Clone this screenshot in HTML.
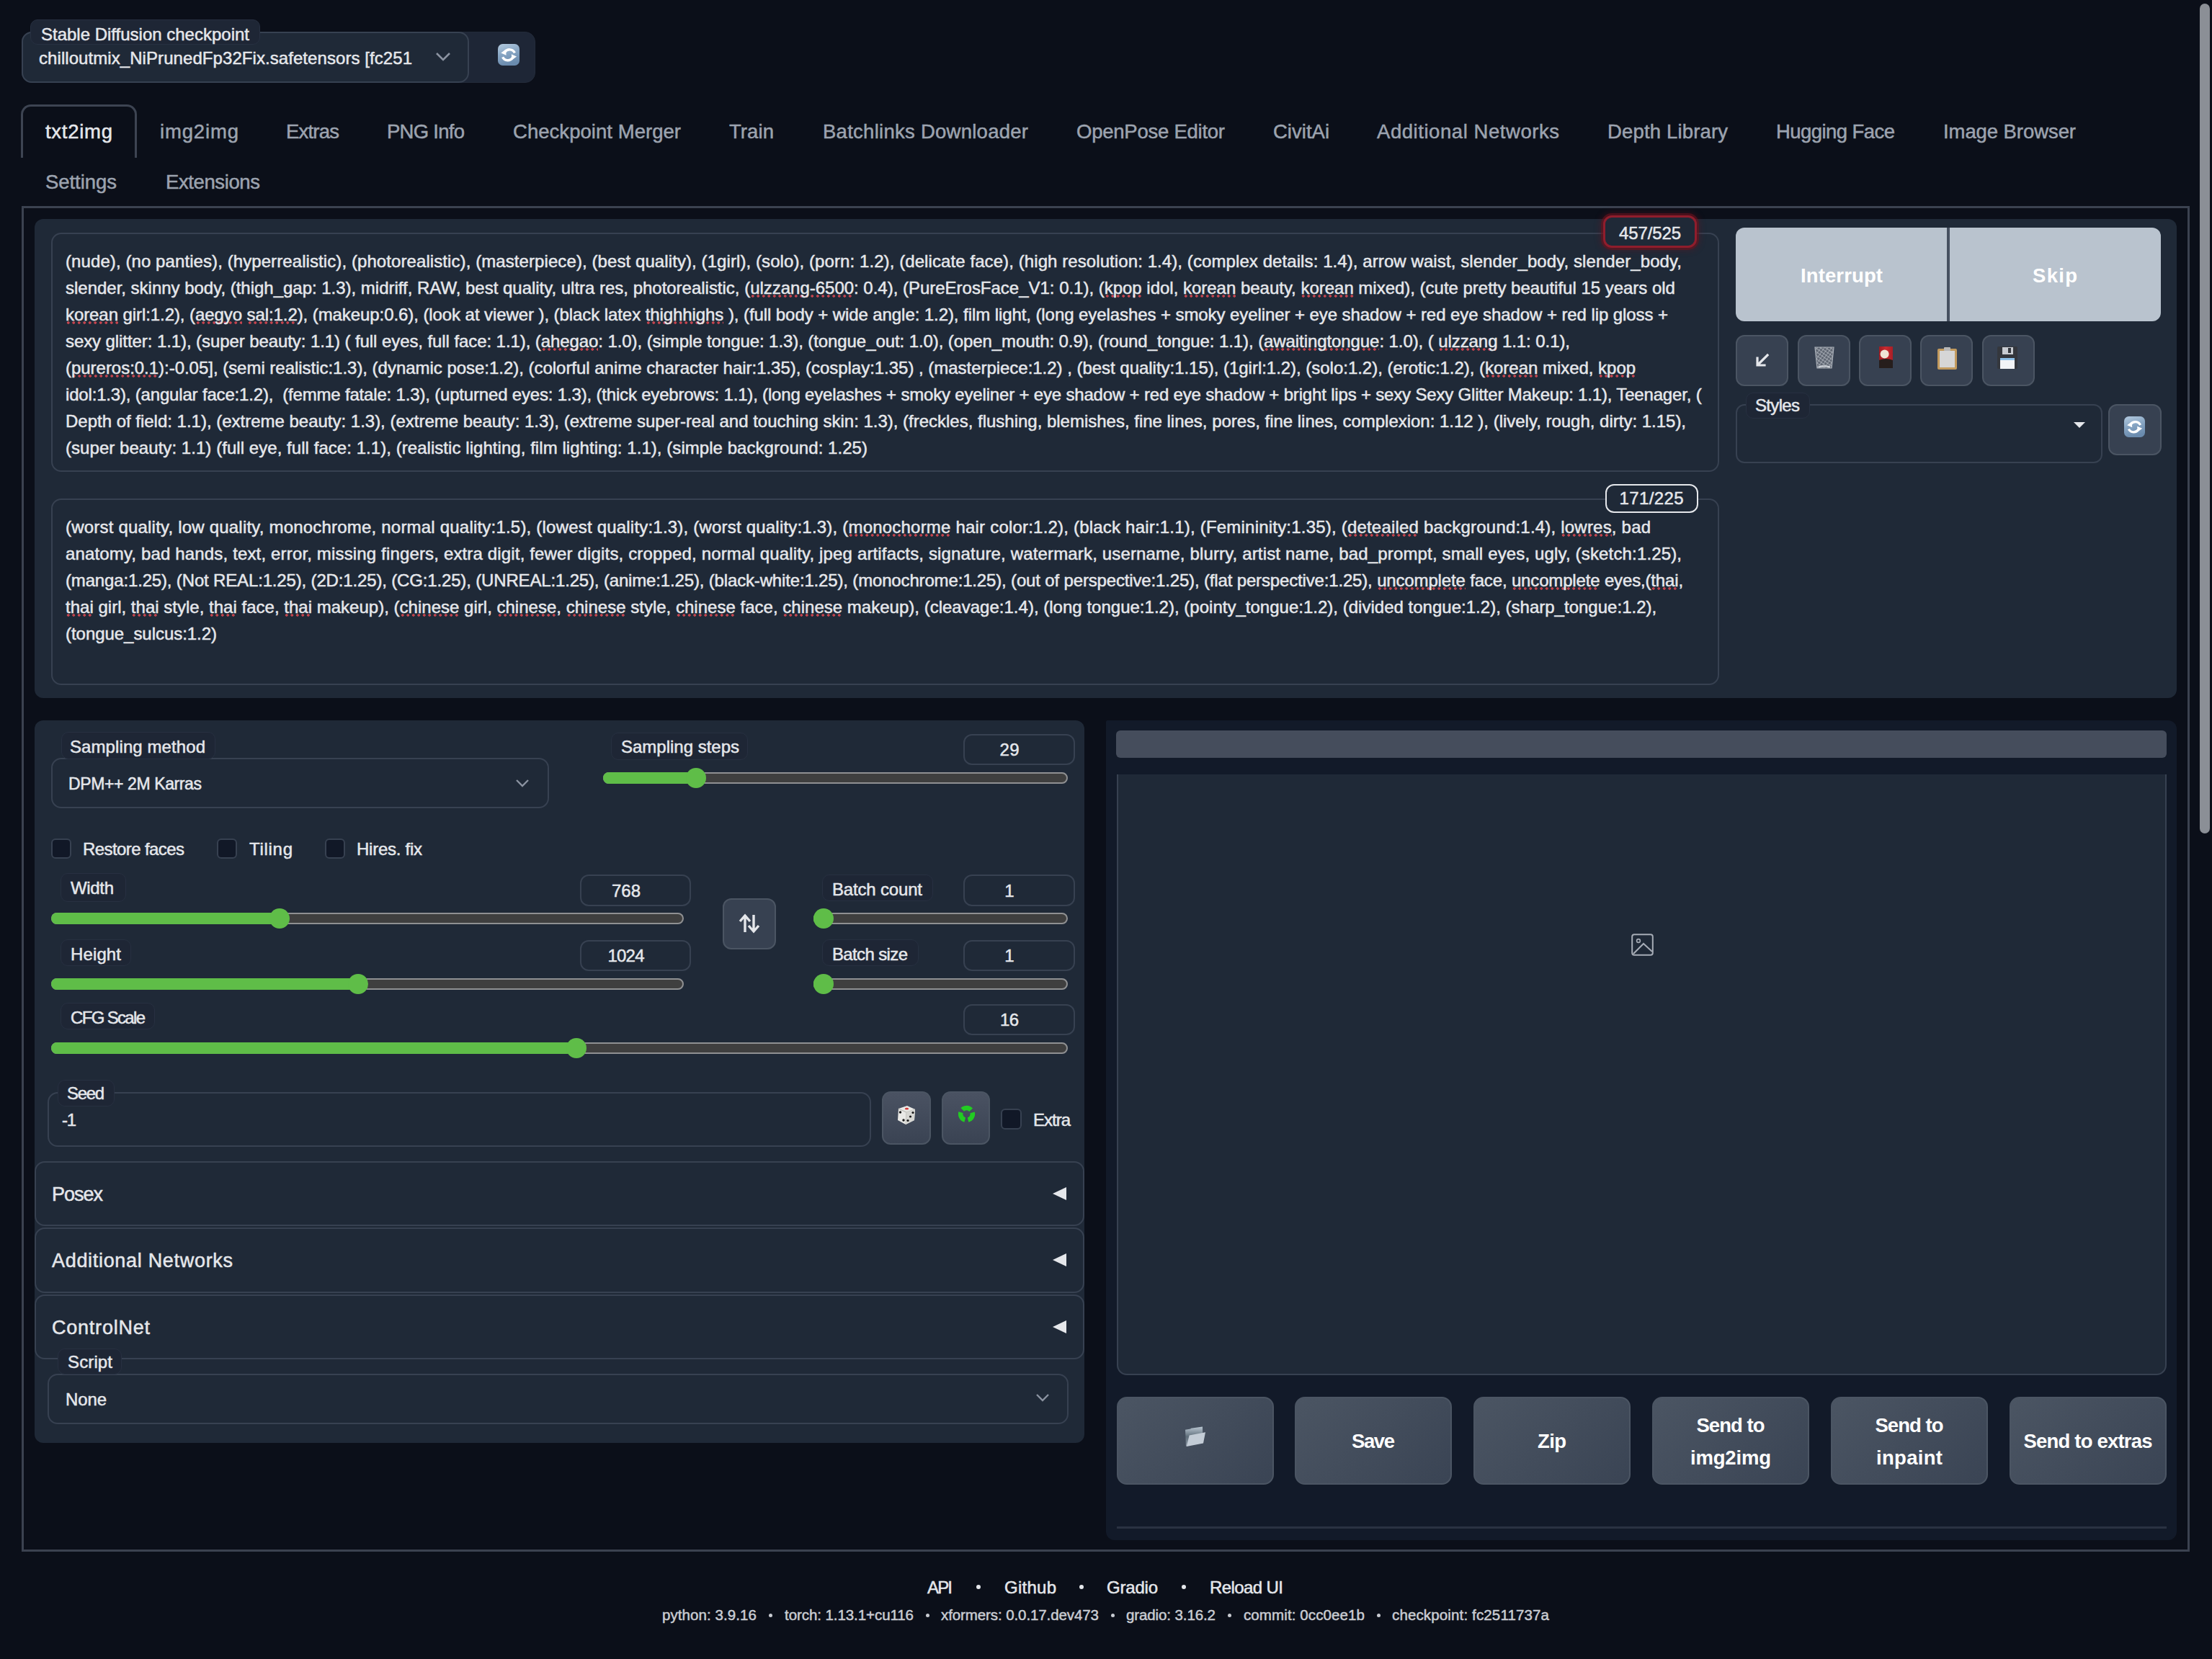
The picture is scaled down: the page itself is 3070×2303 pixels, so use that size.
<!DOCTYPE html>
<html><head><meta charset="utf-8"><style>
html,body{margin:0;padding:0;width:3070px;height:2303px;overflow:hidden;background:#0b0f19;font-family:"Liberation Sans", sans-serif;}
body>div,body>svg{position:absolute;}
body>div{-webkit-text-stroke:0.5px currentColor;}
u{text-decoration:none;background-image:radial-gradient(circle at 3.75px 2px,rgba(205,70,80,0.95) 1.5px,rgba(205,70,80,0) 2.1px);background-size:7.5px 4px;background-repeat:repeat-x;background-position:0 100%;}
</style></head><body>
<div style="left:30px;top:44px;width:713px;height:71px;background:#1e2636;border:1px solid #232b3a;border-radius:14px;box-sizing:border-box;"></div>
<div style="left:30px;top:44px;width:621px;height:71px;background:#1f2937;border:2px solid #374151;border-radius:14px;box-sizing:border-box;"></div>
<div style="left:42px;top:27px;width:319px;height:35px;background:#1e2635;border:1.5px solid #273041;border-radius:10px;box-sizing:border-box;"></div>
<div style="left:57.00px;top:33.88px;font-size:24px;line-height:27.60px;color:#e5e7eb;font-weight:400;letter-spacing:-0.003px;white-space:pre;">Stable Diffusion checkpoint</div>
<div style="left:54.00px;top:66.88px;font-size:24px;line-height:27.60px;color:#e5e7eb;font-weight:400;letter-spacing:0.069px;white-space:pre;">chilloutmix_NiPrunedFp32Fix.safetensors [fc251</div>
<svg style="left:604px;top:72px" width="22" height="14" viewBox="0 0 22 14"><path d="M2 2 L11 11 L20 2" fill="none" stroke="#8b93a1" stroke-width="2.6"/></svg>
<svg style="left:691px;top:61px" width="30" height="30" viewBox="0 0 29 29">
<defs><linearGradient id="rg691" x1="0" y1="0" x2="0.3" y2="1"><stop offset="0" stop-color="#b4cbe0"/><stop offset="0.5" stop-color="#88a6c4"/><stop offset="1" stop-color="#6a8bae"/></linearGradient></defs>
<rect x="0" y="0" width="29" height="29" rx="6.5" fill="url(#rg691)"/>
<path d="M9.2 11.2 A7.6 7.6 0 0 1 22.6 12" fill="none" stroke="#fff" stroke-width="3.3"/>
<path d="M4.2 12.2 L10.6 7.2 L11.2 15.2 Z" fill="#fff"/>
<path d="M6.4 17.6 A7.6 7.6 0 0 0 19.8 18.2" fill="none" stroke="#fff" stroke-width="3.3"/>
<path d="M25.2 16.8 L18.6 21.8 L18.2 13.8 Z" fill="#fff"/>
</svg>
<div style="left:29px;top:145px;width:161px;height:74px;border:3.5px solid #3d4452;border-bottom:none;border-radius:14px 14px 0 0;box-sizing:border-box;background:#0b0f19"></div>
<div style="left:63.00px;top:166.66px;font-size:27.5px;line-height:31.62px;color:#e5e7eb;font-weight:400;letter-spacing:0.727px;white-space:pre;">txt2img</div>
<div style="left:222.00px;top:166.66px;font-size:27.5px;line-height:31.62px;color:#9ca3af;font-weight:400;letter-spacing:0.847px;white-space:pre;">img2img</div>
<div style="left:397.00px;top:166.66px;font-size:27.5px;line-height:31.62px;color:#9ca3af;font-weight:400;letter-spacing:-0.787px;white-space:pre;">Extras</div>
<div style="left:537.00px;top:166.66px;font-size:27.5px;line-height:31.62px;color:#9ca3af;font-weight:400;letter-spacing:-0.729px;white-space:pre;">PNG Info</div>
<div style="left:712.00px;top:166.66px;font-size:27.5px;line-height:31.62px;color:#9ca3af;font-weight:400;letter-spacing:0.042px;white-space:pre;">Checkpoint Merger</div>
<div style="left:1012.00px;top:166.66px;font-size:27.5px;line-height:31.62px;color:#9ca3af;font-weight:400;letter-spacing:0.092px;white-space:pre;">Train</div>
<div style="left:1142.00px;top:166.66px;font-size:27.5px;line-height:31.62px;color:#9ca3af;font-weight:400;letter-spacing:0.264px;white-space:pre;">Batchlinks Downloader</div>
<div style="left:1494.00px;top:166.66px;font-size:27.5px;line-height:31.62px;color:#9ca3af;font-weight:400;letter-spacing:-0.245px;white-space:pre;">OpenPose Editor</div>
<div style="left:1767.00px;top:166.66px;font-size:27.5px;line-height:31.62px;color:#9ca3af;font-weight:400;letter-spacing:0.013px;white-space:pre;">CivitAi</div>
<div style="left:1911.00px;top:166.66px;font-size:27.5px;line-height:31.62px;color:#9ca3af;font-weight:400;letter-spacing:0.554px;white-space:pre;">Additional Networks</div>
<div style="left:2231.00px;top:166.66px;font-size:27.5px;line-height:31.62px;color:#9ca3af;font-weight:400;letter-spacing:0.160px;white-space:pre;">Depth Library</div>
<div style="left:2465.00px;top:166.66px;font-size:27.5px;line-height:31.62px;color:#9ca3af;font-weight:400;letter-spacing:-0.565px;white-space:pre;">Hugging Face</div>
<div style="left:2697.00px;top:166.66px;font-size:27.5px;line-height:31.62px;color:#9ca3af;font-weight:400;letter-spacing:-0.077px;white-space:pre;">Image Browser</div>
<div style="left:63.00px;top:236.66px;font-size:27.5px;line-height:31.62px;color:#9ca3af;font-weight:400;letter-spacing:-0.052px;white-space:pre;">Settings</div>
<div style="left:230.00px;top:236.66px;font-size:27.5px;line-height:31.62px;color:#9ca3af;font-weight:400;letter-spacing:-0.391px;white-space:pre;">Extensions</div>
<div style="left:30px;top:286px;width:3009px;height:1868px;background:transparent;border:3px solid #3b4250;border-radius:0;box-sizing:border-box;"></div>
<div style="left:48px;top:304px;width:2973px;height:665px;background:#1f2937;border-radius:12px;box-sizing:border-box;"></div>
<div style="left:71px;top:323px;width:2315px;height:332px;background:#1f2937;border:2px solid #374151;border-radius:14px;box-sizing:border-box;"></div>
<div style="left:71px;top:692px;width:2315px;height:259px;background:#1f2937;border:2px solid #374151;border-radius:14px;box-sizing:border-box;"></div>
<div style="left:91.00px;top:348.88px;font-size:24px;line-height:27.60px;color:#e5e7eb;font-weight:400;letter-spacing:0.085px;white-space:pre;">(nude), (no panties), (hyperrealistic), (photorealistic), (masterpiece), (best quality), (1girl), (solo), (porn: 1.2), (delicate face), (high resolution: 1.4), (complex details: 1.4), arrow waist, slender_body, slender_body,</div>
<div style="left:91.00px;top:385.88px;font-size:24px;line-height:27.60px;color:#e5e7eb;font-weight:400;letter-spacing:-0.015px;white-space:pre;">slender, skinny body, (thigh_gap: 1.3), midriff, RAW, best quality, ultra res, photorealistic, (<u>ulzzang-6500</u>: 0.4), (PureErosFace_V1: 0.1), (<u>kpop</u> idol, <u>korean</u> beauty, <u>korean</u> mixed), (cute pretty beautiful 15 years old</div>
<div style="left:91.00px;top:422.88px;font-size:24px;line-height:27.60px;color:#e5e7eb;font-weight:400;letter-spacing:-0.079px;white-space:pre;"><u>korean</u> girl:1.2), (<u>aegyo</u> <u>sal:1.2</u>), (makeup:0.6), (look at viewer ), (black latex <u>thighhighs</u> ), (full body + wide angle: 1.2), film light, (long eyelashes + smoky eyeliner + eye shadow + red eye shadow + red lip gloss +</div>
<div style="left:91.00px;top:459.88px;font-size:24px;line-height:27.60px;color:#e5e7eb;font-weight:400;letter-spacing:-0.083px;white-space:pre;">sexy glitter: 1.1), (super beauty: 1.1) ( full eyes, full face: 1.1), (<u>ahegao</u>: 1.0), (simple tongue: 1.3), (tongue_out: 1.0), (open_mouth: 0.9), (round_tongue: 1.1), (<u>awaitingtongue</u>: 1.0), ( <u>ulzzang</u> 1.1: 0.1),</div>
<div style="left:91.00px;top:496.88px;font-size:24px;line-height:27.60px;color:#e5e7eb;font-weight:400;letter-spacing:-0.027px;white-space:pre;">(<u>pureros:0.1</u>):-0.05], (semi realistic:1.3), (dynamic pose:1.2), (colorful anime character hair:1.35), (cosplay:1.35) , (masterpiece:1.2) , (best quality:1.15), (1girl:1.2), (solo:1.2), (erotic:1.2), (<u>korean</u> mixed, <u>kpop</u></div>
<div style="left:91.00px;top:533.88px;font-size:24px;line-height:27.60px;color:#e5e7eb;font-weight:400;letter-spacing:-0.177px;white-space:pre;">idol:1.3), (angular face:1.2),  (femme fatale: 1.3), (upturned eyes: 1.3), (thick eyebrows: 1.1), (long eyelashes + smoky eyeliner + eye shadow + red eye shadow + bright lips + sexy Sexy Glitter Makeup: 1.1), Teenager, (</div>
<div style="left:91.00px;top:570.88px;font-size:24px;line-height:27.60px;color:#e5e7eb;font-weight:400;letter-spacing:-0.010px;white-space:pre;">Depth of field: 1.1), (extreme beauty: 1.3), (extreme beauty: 1.3), (extreme super-real and touching skin: 1.3), (freckles, flushing, blemishes, fine lines, pores, fine lines, complexion: 1.12 ), (lively, rough, dirty: 1.15),</div>
<div style="left:91.00px;top:607.88px;font-size:24px;line-height:27.60px;color:#e5e7eb;font-weight:400;letter-spacing:0.051px;white-space:pre;">(super beauty: 1.1) (full eye, full face: 1.1), (realistic lighting, film lighting: 1.1), (simple background: 1.25)</div>
<div style="left:91.00px;top:717.88px;font-size:24px;line-height:27.60px;color:#e5e7eb;font-weight:400;letter-spacing:0.204px;white-space:pre;">(worst quality, low quality, monochrome, normal quality:1.5), (lowest quality:1.3), (worst quality:1.3), (<u>monochorme</u> hair color:1.2), (black hair:1.1), (Femininity:1.35), (<u>deteailed</u> background:1.4), <u>lowres</u>, bad</div>
<div style="left:91.00px;top:754.88px;font-size:24px;line-height:27.60px;color:#e5e7eb;font-weight:400;letter-spacing:0.155px;white-space:pre;">anatomy, bad hands, text, error, missing fingers, extra digit, fewer digits, cropped, normal quality, jpeg artifacts, signature, watermark, username, blurry, artist name, bad_prompt, small eyes, ugly, (sketch:1.25),</div>
<div style="left:91.00px;top:791.88px;font-size:24px;line-height:27.60px;color:#e5e7eb;font-weight:400;letter-spacing:-0.158px;white-space:pre;">(manga:1.25), (Not REAL:1.25), (2D:1.25), (CG:1.25), (UNREAL:1.25), (anime:1.25), (black-white:1.25), (monochrome:1.25), (out of perspective:1.25), (flat perspective:1.25), <u>uncomplete</u> face, <u>uncomplete</u> eyes,(<u>thai</u>,</div>
<div style="left:91.00px;top:828.88px;font-size:24px;line-height:27.60px;color:#e5e7eb;font-weight:400;letter-spacing:0.013px;white-space:pre;"><u>thai</u> girl, <u>thai</u> style, <u>thai</u> face, <u>thai</u> makeup), (<u>chinese</u> girl, <u>chinese</u>, <u>chinese</u> style, <u>chinese</u> face, <u>chinese</u> makeup), (cleavage:1.4), (long tongue:1.2), (pointy_tongue:1.2), (divided tongue:1.2), (sharp_tongue:1.2),</div>
<div style="left:91.00px;top:865.88px;font-size:24px;line-height:27.60px;color:#e5e7eb;font-weight:400;letter-spacing:-0.044px;white-space:pre;">(tongue_sulcus:1.2)</div>
<div style="left:2225px;top:299px;width:130px;height:45px;background:#1f2937;border:3px solid #8f1d2c;border-radius:12px;box-sizing:border-box;box-shadow:0 0 0 3px rgba(110,18,30,0.55),0 0 8px 4px rgba(110,18,30,0.35);"></div>
<div style="left:2247.00px;top:309.88px;font-size:24px;line-height:27.60px;color:#e5e7eb;font-weight:400;letter-spacing:-0.126px;white-space:pre;">457/525</div>
<div style="left:2228px;top:672px;width:129px;height:40px;background:#1f2937;border:2px solid #e5e7eb;border-radius:12px;box-sizing:border-box;"></div>
<div style="left:2247.50px;top:677.88px;font-size:24px;line-height:27.60px;color:#e5e7eb;font-weight:400;letter-spacing:0.374px;white-space:pre;">171/225</div>
<div style="left:2409px;top:316px;width:590px;height:130px;background:#b9c3ce;border-radius:12px;box-sizing:border-box;"></div>
<div style="left:2702px;top:316px;width:4px;height:130px;background:#465060;border-radius:0;box-sizing:border-box;"></div>
<div style="-webkit-text-stroke:0;left:2499.00px;top:366.66px;font-size:27.5px;line-height:31.62px;color:#ffffff;font-weight:700;letter-spacing:0.119px;white-space:pre;">Interrupt</div>
<div style="-webkit-text-stroke:0;left:2821.00px;top:366.66px;font-size:27.5px;line-height:31.62px;color:#ffffff;font-weight:700;letter-spacing:1.308px;white-space:pre;">Skip</div>
<div style="left:2409px;top:465px;width:73px;height:71px;background:#374151;border:2px solid #4b5563;border-radius:12px;box-sizing:border-box;"></div>
<div style="left:2495px;top:465px;width:73px;height:71px;background:#374151;border:2px solid #4b5563;border-radius:12px;box-sizing:border-box;"></div>
<div style="left:2580px;top:465px;width:73px;height:71px;background:#374151;border:2px solid #4b5563;border-radius:12px;box-sizing:border-box;"></div>
<div style="left:2665px;top:465px;width:73px;height:71px;background:#374151;border:2px solid #4b5563;border-radius:12px;box-sizing:border-box;"></div>
<div style="left:2751px;top:465px;width:73px;height:71px;background:#374151;border:2px solid #4b5563;border-radius:12px;box-sizing:border-box;"></div>
<svg style="left:2433px;top:488px" width="26" height="26" viewBox="0 0 26 26"><path d="M20 5 L7 18 M6 9 L6 19 L16 19" fill="none" stroke="#e5e7eb" stroke-width="3.2" stroke-linecap="square"/></svg>
<svg style="left:2518px;top:481px" width="28" height="31" viewBox="0 0 28 31"><defs><pattern id="mesh" width="4" height="4" patternUnits="userSpaceOnUse" patternTransform="rotate(35)"><rect width="4" height="4" fill="#5f6672"/><path d="M0 0 L4 0 M0 0 L0 4" stroke="#b3b9c1" stroke-width="1.3"/></pattern></defs><path d="M1 1 L27 1 L24 30 L4 30 Z" fill="url(#mesh)"/><path d="M1 1 L27 1 L24 30 L4 30 Z" fill="none" stroke="#a9afb8" stroke-width="1.2"/><path d="M6 28.5 Q14 26 22 28.5" stroke="#d0d4da" stroke-width="2" fill="none"/></svg>
<svg style="left:2608px;top:481px" width="19" height="30" viewBox="0 0 19 30"><defs><linearGradient id="cardg" x1="0" y1="0" x2="1" y2="0"><stop offset="0" stop-color="#9e1c22"/><stop offset="0.5" stop-color="#c92a30"/><stop offset="1" stop-color="#a81f26"/></linearGradient></defs><rect x="0" y="0" width="19" height="30" fill="url(#cardg)"/><path d="M0 19 Q9.5 15 19 19 L19 30 L0 30 Z" fill="#261e1c"/><circle cx="7.6" cy="10.5" r="6" fill="#efe4d6"/></svg>
<svg style="left:2689px;top:481px" width="27" height="32" viewBox="0 0 27 32"><rect x="0" y="3" width="27" height="29" rx="2" fill="#c29a5e"/><rect x="3" y="6" width="21" height="23" fill="#d6d6d6"/><rect x="9" y="1" width="9" height="5" rx="1" fill="#b8b8b8"/></svg>
<svg style="left:2772px;top:481px" width="28" height="31" viewBox="0 0 28 31"><rect x="0" y="0" width="28" height="31" rx="2" fill="#34373d"/><rect x="7" y="1" width="15" height="10" fill="#c8ccd2"/><rect x="15" y="2" width="4" height="7" fill="#34373d"/><rect x="4" y="16" width="20" height="15" fill="#f2f4f7"/><rect x="4" y="16" width="20" height="3" fill="#8ec1ea"/></svg>
<div style="left:2409px;top:561px;width:509px;height:82px;background:#1f2937;border:2px solid #374151;border-radius:12px;box-sizing:border-box;"></div>
<div style="left:2423px;top:545px;width:89px;height:36px;background:#1e2635;border:1.5px solid #273041;border-radius:10px;box-sizing:border-box;"></div>
<div style="left:2436.00px;top:548.88px;font-size:24px;line-height:27.60px;color:#e5e7eb;font-weight:400;letter-spacing:-0.671px;white-space:pre;">Styles</div>
<svg style="left:2877px;top:585px" width="18" height="10" viewBox="0 0 18 10"><path d="M1 1 L17 1 L9 9 Z" fill="#e5e7eb"/></svg>
<div style="left:2926px;top:561px;width:74px;height:71px;background:#374151;border:2px solid #4b5563;border-radius:12px;box-sizing:border-box;"></div>
<svg style="left:2948px;top:578px" width="29" height="29" viewBox="0 0 29 29">
<defs><linearGradient id="rg2948" x1="0" y1="0" x2="0.3" y2="1"><stop offset="0" stop-color="#b4cbe0"/><stop offset="0.5" stop-color="#88a6c4"/><stop offset="1" stop-color="#6a8bae"/></linearGradient></defs>
<rect x="0" y="0" width="29" height="29" rx="6.5" fill="url(#rg2948)"/>
<path d="M9.2 11.2 A7.6 7.6 0 0 1 22.6 12" fill="none" stroke="#fff" stroke-width="3.3"/>
<path d="M4.2 12.2 L10.6 7.2 L11.2 15.2 Z" fill="#fff"/>
<path d="M6.4 17.6 A7.6 7.6 0 0 0 19.8 18.2" fill="none" stroke="#fff" stroke-width="3.3"/>
<path d="M25.2 16.8 L18.6 21.8 L18.2 13.8 Z" fill="#fff"/>
</svg>
<div style="left:48px;top:1000px;width:1457px;height:1003px;background:#1f2937;border-radius:12px;box-sizing:border-box;"></div>
<div style="left:71px;top:1052px;width:691px;height:70px;background:#1f2937;border:2px solid #374151;border-radius:14px;box-sizing:border-box;"></div>
<div style="left:85px;top:1016px;width:214px;height:38px;background:#1e2635;border:1.5px solid #273041;border-radius:10px;box-sizing:border-box;"></div>
<div style="left:97.00px;top:1022.88px;font-size:24px;line-height:27.60px;color:#e5e7eb;font-weight:400;letter-spacing:0.088px;white-space:pre;">Sampling method</div>
<div style="left:95.00px;top:1074.81px;font-size:23px;line-height:26.45px;color:#e5e7eb;font-weight:400;letter-spacing:-0.389px;white-space:pre;">DPM++ 2M Karras</div>
<svg style="left:715px;top:1081px" width="20" height="13" viewBox="0 0 20 13"><path d="M2 2 L10 10 L18 2" fill="none" stroke="#8b93a1" stroke-width="2.4"/></svg>
<div style="left:848px;top:1017px;width:190px;height:38px;background:#1e2635;border:1.5px solid #273041;border-radius:10px;box-sizing:border-box;"></div>
<div style="left:862.00px;top:1022.88px;font-size:24px;line-height:27.60px;color:#e5e7eb;font-weight:400;letter-spacing:-0.007px;white-space:pre;">Sampling steps</div>
<div style="left:1337px;top:1019px;width:155px;height:43px;background:#1f2937;border:2px solid #374151;border-radius:12px;box-sizing:border-box;"></div>
<div style="left:1387.50px;top:1026.88px;font-size:24px;line-height:27.60px;color:#e5e7eb;font-weight:400;letter-spacing:0.305px;white-space:pre;">29</div>
<div style="left:837px;top:1072px;width:645px;height:16px;background:#3f3f3f;border:2px solid #8f9092;border-radius:8px;box-sizing:border-box;"></div>
<div style="left:837px;top:1072px;width:129px;height:16px;background:#5fbd48;border-radius:8px;box-sizing:border-box;"></div>
<div style="left:952px;top:1066px;width:28px;height:28px;background:#5fbd48;border-radius:50%;box-sizing:border-box;"></div>
<div style="left:71px;top:1164px;width:28px;height:28px;background:#111827;border:2px solid #374151;border-radius:6px;box-sizing:border-box;"></div>
<div style="left:115.00px;top:1164.88px;font-size:24px;line-height:27.60px;color:#e5e7eb;font-weight:400;letter-spacing:-0.589px;white-space:pre;">Restore faces</div>
<div style="left:301px;top:1164px;width:28px;height:28px;background:#111827;border:2px solid #374151;border-radius:6px;box-sizing:border-box;"></div>
<div style="left:346.00px;top:1164.88px;font-size:24px;line-height:27.60px;color:#e5e7eb;font-weight:400;letter-spacing:0.708px;white-space:pre;">Tiling</div>
<div style="left:451px;top:1164px;width:28px;height:28px;background:#111827;border:2px solid #374151;border-radius:6px;box-sizing:border-box;"></div>
<div style="left:495.00px;top:1164.88px;font-size:24px;line-height:27.60px;color:#e5e7eb;font-weight:400;letter-spacing:-0.260px;white-space:pre;">Hires. fix</div>
<div style="left:84px;top:1212px;width:91px;height:40px;background:#1e2635;border:1.5px solid #273041;border-radius:10px;box-sizing:border-box;"></div>
<div style="left:98.00px;top:1218.88px;font-size:24px;line-height:27.60px;color:#e5e7eb;font-weight:400;letter-spacing:-0.337px;white-space:pre;">Width</div>
<div style="left:805px;top:1214px;width:154px;height:44px;background:#1f2937;border:2px solid #374151;border-radius:12px;box-sizing:border-box;"></div>
<div style="left:849.00px;top:1222.88px;font-size:24px;line-height:27.60px;color:#e5e7eb;font-weight:400;letter-spacing:-0.021px;white-space:pre;">768</div>
<div style="left:71px;top:1267px;width:878px;height:16px;background:#3f3f3f;border:2px solid #8f9092;border-radius:8px;box-sizing:border-box;"></div>
<div style="left:71px;top:1267px;width:317px;height:16px;background:#5fbd48;border-radius:8px;box-sizing:border-box;"></div>
<div style="left:374px;top:1261px;width:28px;height:28px;background:#5fbd48;border-radius:50%;box-sizing:border-box;"></div>
<div style="left:84px;top:1304px;width:98px;height:37px;background:#1e2635;border:1.5px solid #273041;border-radius:10px;box-sizing:border-box;"></div>
<div style="left:98.00px;top:1310.88px;font-size:24px;line-height:27.60px;color:#e5e7eb;font-weight:400;letter-spacing:0.125px;white-space:pre;">Height</div>
<div style="left:805px;top:1305px;width:154px;height:43px;background:#1f2937;border:2px solid #374151;border-radius:12px;box-sizing:border-box;"></div>
<div style="left:843.50px;top:1312.88px;font-size:24px;line-height:27.60px;color:#e5e7eb;font-weight:400;letter-spacing:-0.797px;white-space:pre;">1024</div>
<div style="left:71px;top:1358px;width:878px;height:16px;background:#3f3f3f;border:2px solid #8f9092;border-radius:8px;box-sizing:border-box;"></div>
<div style="left:71px;top:1358px;width:426px;height:16px;background:#5fbd48;border-radius:8px;box-sizing:border-box;"></div>
<div style="left:483px;top:1352px;width:28px;height:28px;background:#5fbd48;border-radius:50%;box-sizing:border-box;"></div>
<div style="left:1003px;top:1247px;width:74px;height:71px;background:#374151;border:2px solid #4b5563;border-radius:12px;box-sizing:border-box;"></div>
<svg style="left:1025px;top:1268px" width="30" height="28" viewBox="0 0 30 28"><path d="M9 26 L9 4 M2 11 L9 3 L16 11 M21 2 L21 24 M14 17 L21 25 L28 17" fill="none" stroke="#e5e7eb" stroke-width="3.4"/></svg>
<div style="left:1141px;top:1214px;width:154px;height:37px;background:#1e2635;border:1.5px solid #273041;border-radius:10px;box-sizing:border-box;"></div>
<div style="left:1155.00px;top:1220.88px;font-size:24px;line-height:27.60px;color:#e5e7eb;font-weight:400;letter-spacing:-0.175px;white-space:pre;">Batch count</div>
<div style="left:1337px;top:1214px;width:155px;height:44px;background:#1f2937;border:2px solid #374151;border-radius:12px;box-sizing:border-box;"></div>
<div style="left:1394.33px;top:1222.88px;font-size:24px;line-height:27.60px;color:#e5e7eb;font-weight:400;letter-spacing:0.000px;white-space:pre;">1</div>
<div style="left:1129px;top:1267px;width:353px;height:16px;background:#3f3f3f;border:2px solid #8f9092;border-radius:8px;box-sizing:border-box;"></div>
<div style="left:1129px;top:1267px;width:14px;height:16px;background:#5fbd48;border-radius:8px;box-sizing:border-box;"></div>
<div style="left:1129px;top:1261px;width:28px;height:28px;background:#5fbd48;border-radius:50%;box-sizing:border-box;"></div>
<div style="left:1141px;top:1304px;width:134px;height:37px;background:#1e2635;border:1.5px solid #273041;border-radius:10px;box-sizing:border-box;"></div>
<div style="left:1155.00px;top:1310.88px;font-size:24px;line-height:27.60px;color:#e5e7eb;font-weight:400;letter-spacing:-0.635px;white-space:pre;">Batch size</div>
<div style="left:1337px;top:1305px;width:155px;height:43px;background:#1f2937;border:2px solid #374151;border-radius:12px;box-sizing:border-box;"></div>
<div style="left:1394.33px;top:1312.88px;font-size:24px;line-height:27.60px;color:#e5e7eb;font-weight:400;letter-spacing:0.000px;white-space:pre;">1</div>
<div style="left:1129px;top:1358px;width:353px;height:16px;background:#3f3f3f;border:2px solid #8f9092;border-radius:8px;box-sizing:border-box;"></div>
<div style="left:1129px;top:1358px;width:14px;height:16px;background:#5fbd48;border-radius:8px;box-sizing:border-box;"></div>
<div style="left:1129px;top:1352px;width:28px;height:28px;background:#5fbd48;border-radius:50%;box-sizing:border-box;"></div>
<div style="left:84px;top:1392px;width:131px;height:37px;background:#1e2635;border:1.5px solid #273041;border-radius:10px;box-sizing:border-box;"></div>
<div style="left:98.00px;top:1398.88px;font-size:24px;line-height:27.60px;color:#e5e7eb;font-weight:400;letter-spacing:-1.670px;white-space:pre;">CFG Scale</div>
<div style="left:1337px;top:1394px;width:155px;height:43px;background:#1f2937;border:2px solid #374151;border-radius:12px;box-sizing:border-box;"></div>
<div style="left:1388.00px;top:1401.88px;font-size:24px;line-height:27.60px;color:#e5e7eb;font-weight:400;letter-spacing:-0.695px;white-space:pre;">16</div>
<div style="left:71px;top:1447px;width:1411px;height:16px;background:#3f3f3f;border:2px solid #8f9092;border-radius:8px;box-sizing:border-box;"></div>
<div style="left:71px;top:1447px;width:729px;height:16px;background:#5fbd48;border-radius:8px;box-sizing:border-box;"></div>
<div style="left:786px;top:1441px;width:28px;height:28px;background:#5fbd48;border-radius:50%;box-sizing:border-box;"></div>
<div style="left:66px;top:1516px;width:1143px;height:76px;background:#1f2937;border:2px solid #374151;border-radius:14px;box-sizing:border-box;"></div>
<div style="left:80px;top:1499px;width:79px;height:37px;background:#1e2635;border:1.5px solid #273041;border-radius:10px;box-sizing:border-box;"></div>
<div style="left:93.00px;top:1503.88px;font-size:24px;line-height:27.60px;color:#e5e7eb;font-weight:400;letter-spacing:-1.350px;white-space:pre;">Seed</div>
<div style="left:86.00px;top:1540.88px;font-size:24px;line-height:27.60px;color:#e5e7eb;font-weight:400;letter-spacing:-1.340px;white-space:pre;">-1</div>
<div style="left:1224px;top:1515px;width:68px;height:74px;background:linear-gradient(180deg,#4a5262,#3a4353);border:2px solid #4b5563;border-radius:12px;box-sizing:border-box;"></div>
<div style="left:1307px;top:1515px;width:67px;height:74px;background:linear-gradient(180deg,#4a5262,#3a4353);border:2px solid #4b5563;border-radius:12px;box-sizing:border-box;"></div>
<svg style="left:1242px;top:1532px" width="31" height="31" viewBox="0 0 31 31"><path d="M5 7 L17 3 L28 8 L27 23 L15 29 L4 23 Z" fill="#e9e9e6"/><path d="M5 7 L16 12 L28 8 M16 12 L15 29" stroke="#bdbdb8" stroke-width="1.2" fill="none"/><path d="M16 12 L28 8 L27 23 L15 29 Z" fill="#d6d6d2"/><ellipse cx="16.5" cy="7.2" rx="2.6" ry="1.4" fill="#d23a3a"/><circle cx="7.5" cy="12" r="1.7" fill="#1a1a1a"/><circle cx="12" cy="23" r="1.7" fill="#1a1a1a"/><circle cx="25" cy="12.5" r="1.6" fill="#1a1a1a"/><circle cx="21.5" cy="18" r="1.6" fill="#1a1a1a"/><circle cx="18" cy="23.5" r="1.6" fill="#1a1a1a"/></svg>
<svg style="left:1327px;top:1532px" width="29" height="29" viewBox="0 0 29 29"><g transform="rotate(-15 14.5 14.5)"><circle cx="14.5" cy="14.5" r="8.4" fill="none" stroke="#22cc22" stroke-width="6.5" stroke-dasharray="13.2 4.39"/></g></svg>
<div style="left:1389px;top:1539px;width:29px;height:29px;background:#111827;border:2px solid #374151;border-radius:6px;box-sizing:border-box;"></div>
<div style="left:1434.00px;top:1540.88px;font-size:24px;line-height:27.60px;color:#e5e7eb;font-weight:400;letter-spacing:-1.004px;white-space:pre;">Extra</div>
<div style="left:48px;top:1612px;width:1457px;height:90px;background:#1f2937;border:2px solid #374151;border-radius:14px;box-sizing:border-box;"></div>
<div style="left:72.00px;top:1643.12px;font-size:27px;line-height:31.05px;color:#e5e7eb;font-weight:400;letter-spacing:-1.010px;white-space:pre;">Posex</div>
<svg style="left:1460px;top:1647px" width="21" height="20" viewBox="0 0 21 20"><path d="M20 1 L1 10 L20 19 Z" fill="#e5e7eb"/></svg>
<div style="left:48px;top:1704px;width:1457px;height:91px;background:#1f2937;border:2px solid #374151;border-radius:14px;box-sizing:border-box;"></div>
<div style="left:72.00px;top:1735.12px;font-size:27px;line-height:31.05px;color:#e5e7eb;font-weight:400;letter-spacing:0.688px;white-space:pre;">Additional Networks</div>
<svg style="left:1460px;top:1739px" width="21" height="20" viewBox="0 0 21 20"><path d="M20 1 L1 10 L20 19 Z" fill="#e5e7eb"/></svg>
<div style="left:48px;top:1797px;width:1457px;height:90px;background:#1f2937;border:2px solid #374151;border-radius:14px;box-sizing:border-box;"></div>
<div style="left:72.00px;top:1828.12px;font-size:27px;line-height:31.05px;color:#e5e7eb;font-weight:400;letter-spacing:0.772px;white-space:pre;">ControlNet</div>
<svg style="left:1460px;top:1832px" width="21" height="20" viewBox="0 0 21 20"><path d="M20 1 L1 10 L20 19 Z" fill="#e5e7eb"/></svg>
<div style="left:66px;top:1907px;width:1417px;height:70px;background:#1f2937;border:2px solid #374151;border-radius:14px;box-sizing:border-box;"></div>
<div style="left:80px;top:1872px;width:89px;height:36px;background:#1e2635;border:1.5px solid #273041;border-radius:10px;box-sizing:border-box;"></div>
<div style="left:94.00px;top:1876.88px;font-size:24px;line-height:27.60px;color:#e5e7eb;font-weight:400;letter-spacing:0.130px;white-space:pre;">Script</div>
<div style="left:91.00px;top:1928.88px;font-size:24px;line-height:27.60px;color:#e5e7eb;font-weight:400;letter-spacing:-0.125px;white-space:pre;">None</div>
<svg style="left:1437px;top:1934px" width="20" height="13" viewBox="0 0 20 13"><path d="M2 2 L10 10 L18 2" fill="none" stroke="#8b93a1" stroke-width="2.4"/></svg>
<div style="left:1535px;top:1000px;width:1486px;height:1138px;background:#121a29;border-radius:2px 12px 12px 12px;box-sizing:border-box;"></div>
<div style="left:1549px;top:1014px;width:1458px;height:38px;background:#454d5c;border-radius:6px;box-sizing:border-box;"></div>
<div style="left:1550px;top:1075px;width:1457px;height:834px;background:#1f2937;border:2px solid #374151;border-radius:0 0 14px 14px;box-sizing:border-box;border-top:none;"></div>
<svg style="left:2264px;top:1296px" width="31" height="31" viewBox="0 0 31 31"><rect x="1.2" y="1.2" width="28.6" height="28.6" rx="3" fill="none" stroke="#a6acb6" stroke-width="2"/><circle cx="10" cy="10" r="2.4" fill="none" stroke="#a6acb6" stroke-width="1.6"/><path d="M3 28 L17 14 L29 25" fill="none" stroke="#a6acb6" stroke-width="2"/></svg>
<div style="left:1550px;top:1939px;width:218px;height:122px;background:linear-gradient(135deg,#4b5563,#3a4454);border:2px solid #4b5563;border-radius:14px;box-sizing:border-box;"></div>
<div style="left:1797px;top:1939px;width:218px;height:122px;background:linear-gradient(135deg,#4b5563,#3a4454);border:2px solid #4b5563;border-radius:14px;box-sizing:border-box;"></div>
<div style="left:2045px;top:1939px;width:218px;height:122px;background:linear-gradient(135deg,#4b5563,#3a4454);border:2px solid #4b5563;border-radius:14px;box-sizing:border-box;"></div>
<div style="left:2293px;top:1939px;width:218px;height:122px;background:linear-gradient(135deg,#4b5563,#3a4454);border:2px solid #4b5563;border-radius:14px;box-sizing:border-box;"></div>
<div style="left:2541px;top:1939px;width:218px;height:122px;background:linear-gradient(135deg,#4b5563,#3a4454);border:2px solid #4b5563;border-radius:14px;box-sizing:border-box;"></div>
<div style="left:2789px;top:1939px;width:218px;height:122px;background:linear-gradient(135deg,#4b5563,#3a4454);border:2px solid #4b5563;border-radius:14px;box-sizing:border-box;"></div>
<svg style="left:1640px;top:1975px" width="40" height="40" viewBox="0 0 40 40"><defs><linearGradient id="fb" x1="0" y1="0" x2="0" y2="1"><stop offset="0" stop-color="#b9c6d2"/><stop offset="0.5" stop-color="#5f6e7a"/><stop offset="1" stop-color="#8a96a3"/></linearGradient></defs><path d="M5 9.8 L12.5 8.6 L12.8 7.8 L29 5.6 L29.2 14 L6 33 Z" fill="url(#fb)"/><path d="M10.6 17.5 L33 13.2 L30 28.5 L6.8 33 Z" fill="#c3ccd6"/></svg>
<div style="-webkit-text-stroke:0;left:1876.00px;top:1984.66px;font-size:27.5px;line-height:31.62px;color:#ffffff;font-weight:700;letter-spacing:-1.408px;white-space:pre;">Save</div>
<div style="-webkit-text-stroke:0;left:2134.00px;top:1984.66px;font-size:27.5px;line-height:31.62px;color:#ffffff;font-weight:700;letter-spacing:-0.618px;white-space:pre;">Zip</div>
<div style="-webkit-text-stroke:0;left:2354.50px;top:1962.66px;font-size:27.5px;line-height:31.62px;color:#ffffff;font-weight:700;letter-spacing:-0.971px;white-space:pre;">Send to</div>
<div style="-webkit-text-stroke:0;left:2346.00px;top:2007.66px;font-size:27.5px;line-height:31.62px;color:#ffffff;font-weight:700;letter-spacing:-0.179px;white-space:pre;">img2img</div>
<div style="-webkit-text-stroke:0;left:2602.50px;top:1962.66px;font-size:27.5px;line-height:31.62px;color:#ffffff;font-weight:700;letter-spacing:-0.971px;white-space:pre;">Send to</div>
<div style="-webkit-text-stroke:0;left:2604.00px;top:2007.66px;font-size:27.5px;line-height:31.62px;color:#ffffff;font-weight:700;letter-spacing:0.312px;white-space:pre;">inpaint</div>
<div style="-webkit-text-stroke:0;left:2808.50px;top:1984.66px;font-size:27.5px;line-height:31.62px;color:#ffffff;font-weight:700;letter-spacing:-0.808px;white-space:pre;">Send to extras</div>
<div style="left:1550px;top:2119px;width:1457px;height:3px;background:#2a3242;border-radius:0;box-sizing:border-box;"></div>
<div style="left:1287.00px;top:2189.88px;font-size:24px;line-height:27.60px;color:#e5e7eb;font-weight:400;letter-spacing:-1.842px;white-space:pre;">API</div>
<div style="left:1394.00px;top:2189.88px;font-size:24px;line-height:27.60px;color:#e5e7eb;font-weight:400;letter-spacing:0.258px;white-space:pre;">Github</div>
<div style="left:1536.00px;top:2189.88px;font-size:24px;line-height:27.60px;color:#e5e7eb;font-weight:400;letter-spacing:-0.207px;white-space:pre;">Gradio</div>
<div style="left:1679.00px;top:2189.88px;font-size:24px;line-height:27.60px;color:#e5e7eb;font-weight:400;letter-spacing:-0.590px;white-space:pre;">Reload UI</div>
<div style="left:1355px;top:2200px;width:6px;height:6px;background:#e5e7eb;border-radius:50%;box-sizing:border-box;"></div>
<div style="left:1498px;top:2200px;width:6px;height:6px;background:#e5e7eb;border-radius:50%;box-sizing:border-box;"></div>
<div style="left:1640px;top:2200px;width:6px;height:6px;background:#e5e7eb;border-radius:50%;box-sizing:border-box;"></div>
<div style="left:919.00px;top:2230.11px;font-size:20.5px;line-height:23.57px;color:#c9ccd2;font-weight:400;letter-spacing:0.082px;white-space:pre;">python: 3.9.16</div>
<div style="left:1089.00px;top:2230.11px;font-size:20.5px;line-height:23.57px;color:#c9ccd2;font-weight:400;letter-spacing:-0.070px;white-space:pre;">torch: 1.13.1+cu116</div>
<div style="left:1306.00px;top:2230.11px;font-size:20.5px;line-height:23.57px;color:#c9ccd2;font-weight:400;letter-spacing:-0.094px;white-space:pre;">xformers: 0.0.17.dev473</div>
<div style="left:1563.00px;top:2230.11px;font-size:20.5px;line-height:23.57px;color:#c9ccd2;font-weight:400;letter-spacing:-0.106px;white-space:pre;">gradio: 3.16.2</div>
<div style="left:1726.00px;top:2230.11px;font-size:20.5px;line-height:23.57px;color:#c9ccd2;font-weight:400;letter-spacing:0.110px;white-space:pre;">commit: 0cc0ee1b</div>
<div style="left:1932.00px;top:2230.11px;font-size:20.5px;line-height:23.57px;color:#c9ccd2;font-weight:400;letter-spacing:0.141px;white-space:pre;">checkpoint: fc2511737a</div>
<div style="left:1067px;top:2240px;width:5px;height:5px;background:#c9ccd2;border-radius:50%;box-sizing:border-box;"></div>
<div style="left:1285px;top:2240px;width:5px;height:5px;background:#c9ccd2;border-radius:50%;box-sizing:border-box;"></div>
<div style="left:1542px;top:2240px;width:5px;height:5px;background:#c9ccd2;border-radius:50%;box-sizing:border-box;"></div>
<div style="left:1704px;top:2240px;width:5px;height:5px;background:#c9ccd2;border-radius:50%;box-sizing:border-box;"></div>
<div style="left:1911px;top:2240px;width:5px;height:5px;background:#c9ccd2;border-radius:50%;box-sizing:border-box;"></div>
<div style="left:3053px;top:5px;width:14px;height:1152px;background:#8b8f96;border-radius:7px;box-sizing:border-box;"></div>
</body></html>
